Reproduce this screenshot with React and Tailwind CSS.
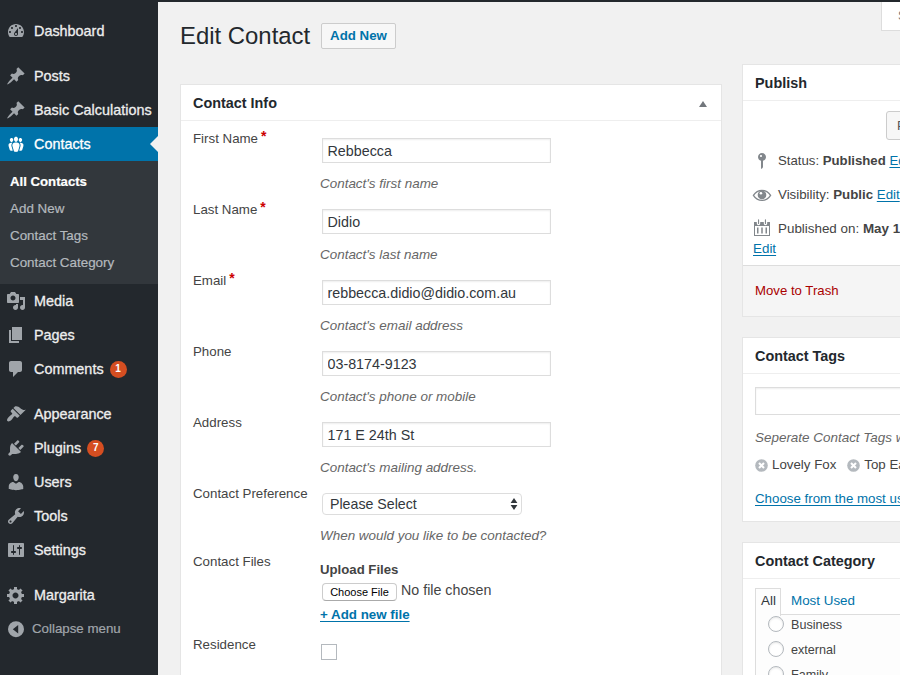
import React from "react";

const paths = {
  dashboard:
    "M3.76 16h12.48c1.1-1.37 1.76-3.11 1.76-5 0-4.42-3.58-8-8-8s-8 3.58-8 8c0 1.89.66 3.63 1.76 5zM10 4c.55 0 1 .45 1 1s-.45 1-1 1-1-.45-1-1 .45-1 1-1zM6 6c.55 0 1 .45 1 1s-.45 1-1 1-1-.45-1-1 .45-1 1-1zm8 0c.55 0 1 .45 1 1s-.45 1-1 1-1-.45-1-1 .45-1 1-1zm-5.37 5.55L12 7v6c0 1.1-.9 2-2 2s-2-.9-2-2c0-.57.24-1.08.63-1.45zM4 10c.55 0 1 .45 1 1s-.45 1-1 1-1-.45-1-1 .45-1 1-1zm12 0c.55 0 1 .45 1 1s-.45 1-1 1-1-.45-1-1 .45-1 1-1zm-5 3c0-.55-.45-1-1-1s-1 .45-1 1 .45 1 1 1 1-.45 1-1z",
  pushpin:
    "M10.44 3.02l1.82-1.82 6.36 6.35-1.83 1.82c-1.05-.68-2.48-.57-3.41.36l-.75.75c-.92.93-1.04 2.35-.35 3.41l-1.83 1.82-2.41-2.41-2.8 2.79c-.42.42-3.38 2.71-3.8 2.29s1.86-3.39 2.28-3.81l2.79-2.79L4.1 9.36l1.83-1.82c1.05.69 2.48.57 3.4-.36l.75-.75c.93-.92 1.05-2.35.36-3.41z",
  groups:
    "M8.03 4.46c-.29 1.28.55 3.46 1.97 3.46 1.41 0 2.25-2.18 1.96-3.46-.22-.98-1.08-1.63-1.96-1.63-.89 0-1.74.65-1.97 1.63zm-4.13.9c-.25 1.08.47 2.93 1.67 2.93s1.92-1.85 1.67-2.93c-.19-.83-.92-1.39-1.67-1.39s-1.48.56-1.67 1.39zm8.86 0c-.25 1.08.47 2.93 1.66 2.93 1.2 0 1.92-1.85 1.67-2.93-.19-.83-.92-1.39-1.67-1.39-.74 0-1.47.56-1.66 1.39zm-.59 11.43l1.25-4.3C14.2 10 12.71 8.47 10 8.47c-2.72 0-4.21 1.53-3.44 4.02l1.26 4.3C8.05 17.51 9 18 10 18c.98 0 1.94-.49 2.17-1.21zm-6.1-7.63c-.49.67-.96 1.83-.42 3.59l1.12 3.79c-.34.2-.77.31-1.2.31-.85 0-1.65-.41-1.85-1.03l-1.07-3.65c-.65-2.11.61-3.4 2.92-3.4.27 0 .54.02.79.06-.1.1-.2.22-.29.33zm8.35-.39c2.31 0 3.58 1.29 2.92 3.4l-1.07 3.65c-.2.62-1 1.03-1.85 1.03-.43 0-.86-.11-1.2-.31l1.11-3.77c.55-1.78.08-2.94-.42-3.61-.08-.11-.18-.23-.28-.33.25-.04.51-.06.79-.06z",
  media:
    "M13 11V4c0-.55-.45-1-1-1h-1.67L9 1H5L3.67 3H2c-.55 0-1 .45-1 1v7c0 .55.45 1 1 1h10c.55 0 1-.45 1-1zM7 4.5c1.38 0 2.5 1.12 2.5 2.5S8.38 9.5 7 9.5 4.5 8.38 4.5 7 5.62 4.5 7 4.5zM14 6h5v10.5c0 1.38-1.12 2.5-2.5 2.5S14 17.88 14 16.5s1.12-2.5 2.5-2.5c.17 0 .34.02.5.05V9h-3V6zm-4 8.05V13h2v3.5c0 1.38-1.12 2.5-2.5 2.5S7 17.88 7 16.5 8.12 14 9.5 14c.17 0 .34.02.5.05z",
  pages: "M6 15V2h10v13H6zm-1 1h8v2H3V5h2v11z",
  comments:
    "M5 2h9c1.1 0 2 .9 2 2v7c0 1.1-.9 2-2 2h-2l-5 5v-5H5c-1.1 0-2-.9-2-2V4c0-1.1.9-2 2-2z",
  appearance:
    "M14.48 11.06L7.41 3.99l1.5-1.5c.5-.56 2.3-.47 3.51.32 1.21.8 1.43 1.28 2.91 2.1 1.18.64 2.45 1.26 4.45.85zm-.71.71L6.7 4.7 4.93 6.47c-.39.39-.39 1.02 0 1.41l1.06 1.06c.39.39.39 1.03 0 1.42-.6.6-1.43 1.11-2.21 1.69-.35.26-.7.53-1.01.84C1.43 14.23.4 16.08 1.4 17.07c.99 1 2.84-.03 4.18-1.36.31-.31.58-.66.85-1.02.57-.78 1.08-1.61 1.69-2.21.39-.39 1.02-.39 1.41 0l1.06 1.06c.39.39 1.02.39 1.41 0z",
  plugins:
    "M13.11 4.36L9.87 7.6 8 5.73l3.24-3.24c.35-.34 1.05-.2 1.56.32.52.51.66 1.21.31 1.55zm-8 1.77l.91-1.12 9.01 9.01-1.19.84c-.71.71-2.63 1.16-3.82 1.16H6.14L4.9 17.26c-.59.59-1.54.59-2.12 0-.59-.58-.59-1.53 0-2.12l1.24-1.24v-3.88c0-1.13.4-3.19 1.09-3.89zm7.26 3.97l3.24-3.24c.34-.35 1.04-.21 1.55.31.52.51.66 1.21.31 1.55l-3.24 3.25z",
  users:
    "M10 9.25c-2.27 0-2.73-3.44-2.73-3.44C7 4.02 7.82 2 9.97 2c2.16 0 2.98 2.02 2.71 3.81 0 0-.41 3.44-2.68 3.44zm0 2.57L12.72 10c2.39 0 4.52 2.33 4.52 4.53v2.49s-3.65 1.13-7.24 1.13c-3.65 0-7.24-1.13-7.24-1.13v-2.49c0-2.25 1.94-4.48 4.47-4.48z",
  tools:
    "M16.68 9.77c-1.34 1.34-3.3 1.67-4.95.99l-5.41 6.52c-.99.99-2.59.99-3.58 0s-.99-2.59 0-3.57l6.52-5.42c-.68-1.65-.35-3.61.99-4.95 1.28-1.28 3.12-1.62 4.72-1.06l-2.89 2.89 2.82 2.82 2.86-2.87c.53 1.58.18 3.39-1.08 4.65zM3.81 16.21c.4.39 1.04.39 1.43 0 .4-.4.4-1.04 0-1.43-.39-.4-1.03-.4-1.43 0-.39.39-.39 1.03 0 1.43z",
  settings:
    "M18 16V4c0-.55-.45-1-1-1H3c-.55 0-1 .45-1 1v12c0 .55.45 1 1 1h14c.55 0 1-.45 1-1zM8 11h1c.55 0 1 .45 1 1s-.45 1-1 1H8v1.5c0 .28-.22.5-.5.5s-.5-.22-.5-.5V13H6c-.55 0-1-.45-1-1s.45-1 1-1h1V5.5c0-.28.22-.5.5-.5s.5.22.5.5V11zm5-2h-1c-.55 0-1-.45-1-1s.45-1 1-1h1V5.5c0-.28.22-.5.5-.5s.5.22.5.5V7h1c.55 0 1 .45 1 1s-.45 1-1 1h-1v5.5c0 .28-.22.5-.5.5s-.5-.22-.5-.5V9z",
  generic:
    "M18 12h-2.18c-.17.7-.44 1.35-.81 1.93l1.54 1.54-2.1 2.1-1.54-1.54c-.58.36-1.23.63-1.91.79V19H8v-2.18c-.68-.16-1.33-.43-1.91-.79l-1.54 1.54-2.12-2.12 1.54-1.54c-.36-.58-.63-1.23-.79-1.91H1V9.03h2.17c.16-.7.44-1.35.8-1.94L2.43 5.55l2.1-2.1 1.54 1.54c.58-.37 1.24-.64 1.93-.81V2h3v2.18c.68.16 1.33.43 1.91.79l1.54-1.54 2.12 2.12-1.54 1.54c.36.59.64 1.24.8 1.94H18V12zm-8.5 1.5c1.66 0 3-1.34 3-3s-1.34-3-3-3-3 1.34-3 3 1.34 3 3 3z",
  collapse:
    "M10 2.2a8 8 0 1 0 0 16 8 8 0 0 0 0-16zM12.2 6v8.4L6.8 10.2z",
  pin: "M14 6c0 1.86-1.28 3.41-3 3.86V16c0 1-2 2-2 2V9.86c-1.72-.45-3-2-3-3.86 0-2.21 1.79-4 4-4s4 1.79 4 4zM8 5c0 .55.45 1 1 1s1-.45 1-1-.45-1-1-1-1 .45-1 1z",
  calendar:
    "M2 4h2.8v1.6a1.7 1.7 0 0 0 3.4 0V4h3.6v1.6a1.7 1.7 0 0 0 3.4 0V4H18v14H2zM3 8v9h14V8zM5 9.500h1.500v6H5zm4.250 0h1.500v6h-1.500zm4.250 0H15v6h-1.500zM6 1.800a.55.55 0 0 1 1.100 0v3.600a.55.55 0 0 1-1.100 0zM12.900 1.800a.55.55 0 0 1 1.100 0v3.600a.55.55 0 0 1-1.100 0z",
};

function Icon({ name, className = "" }) {
  return (
    <svg viewBox="0 0 20 20" className={`size-5 shrink-0 ${className}`} fill="currentColor" fillRule="evenodd">
      <path d={paths[name]} />
    </svg>
  );
}

function EyeIcon() {
  return (
    <svg viewBox="0 0 20 20" className="-ml-px size-5 shrink-0">
      <path d="M1.4 10.4C3.6 7 6.6 5.4 10 5.4s6.4 1.6 8.6 5c-2.2 3.4-5.2 5-8.6 5s-6.4-1.6-8.6-5z" fill="none" stroke="#82878c" strokeWidth="1.3" />
      <circle cx="10" cy="9.900" r="4.300" fill="#82878c" />
      <circle cx="8.900" cy="8.300" r="1.300" fill="#fff" />
    </svg>
  );
}

function MenuItem({ icon, label, badge, active }) {
  return (
    <li className={`relative flex h-[34px] items-center pl-1.5 ${active ? "bg-[#0073aa] text-white" : "text-[#eee]"}`}>
      <Icon name={icon} className={active ? "text-white" : "text-[#a0a5aa]"} />
      <span className="ml-2 whitespace-nowrap text-[14.4px] leading-[18px] [-webkit-text-stroke:0.3px]">{label}</span>
      {badge && (
        <span className="ml-[6px] flex size-[17px] items-center justify-center rounded-full bg-[#d54e21] text-[10px] font-bold leading-none text-white">
          {badge}
        </span>
      )}
      {active && (
        <span className="absolute right-0 top-[9px] border-y-8 border-r-8 border-y-transparent border-r-[#f1f1f1]" />
      )}
    </li>
  );
}

function Sidebar() {
  return (
    <nav className="w-[158px] shrink-0 bg-[#23282d] pt-3">
      <ul>
        <MenuItem icon="dashboard" label="Dashboard" />
      </ul>
      <ul className="mt-[11px]">
        <MenuItem icon="pushpin" label="Posts" />
        <MenuItem icon="pushpin" label="Basic Calculations" />
        <MenuItem icon="groups" label="Contacts" active />
        <li className="bg-[#32373c] pb-2 pl-[10px] pt-[7px] text-[13.4px] leading-[27px] text-[#b4b9be] [-webkit-text-stroke:0.2px]">
          <ul>
            <li className="text-[13.2px] font-bold text-white">All Contacts</li>
            <li>Add New</li>
            <li>Contact Tags</li>
            <li>Contact Category</li>
          </ul>
        </li>
        <MenuItem icon="media" label="Media" />
        <MenuItem icon="pages" label="Pages" />
        <MenuItem icon="comments" label="Comments" badge="1" />
      </ul>
      <ul className="mt-[11px]">
        <MenuItem icon="appearance" label="Appearance" />
        <MenuItem icon="plugins" label="Plugins" badge="7" />
        <MenuItem icon="users" label="Users" />
        <MenuItem icon="tools" label="Tools" />
        <MenuItem icon="settings" label="Settings" />
      </ul>
      <ul className="mt-[11px]">
        <MenuItem icon="generic" label="Margarita" />
        <li className="flex h-[34px] items-center pl-1.5 text-[#a0a5aa]">
          <Icon name="collapse" />
          <span className="ml-1.5 text-[13.3px] leading-[18px] [-webkit-text-stroke:0.2px]">Collapse menu</span>
        </li>
      </ul>
    </nav>
  );
}

function Box({ title, toggle, className = "", children }) {
  return (
    <section className={`border border-[#e5e5e5] bg-white ${className}`}>
      <header className="flex h-9 items-center justify-between border-b border-[#eee] px-3">
        <h2 className="whitespace-nowrap text-[14.4px] font-bold leading-5 text-[#23282d]">{title}</h2>
        {toggle && (
          <svg viewBox="0 0 8 6" className="mr-[2px] mt-[3px] h-1.5 w-2 fill-[#72777c]">
            <path d="M4 0l4 6H0z" />
          </svg>
        )}
      </header>
      {children}
    </section>
  );
}

function Row({ label, required, className, children }) {
  return (
    <div className={`flex ${className}`}>
      <div className="w-[127px] shrink-0 whitespace-nowrap pt-[9px] text-[13.3px] leading-[18px]">
        {label}
        {required && <span className="relative -top-[2px] ml-[3px] text-[14px] font-bold leading-none text-[#c00]">*</span>}
      </div>
      <div>{children}</div>
    </div>
  );
}

function Description({ children }) {
  return <p className="whitespace-nowrap text-[13.45px] italic leading-[18px] text-[#666]">{children}</p>;
}

function TextField({ label, required, value, hint }) {
  return (
    <Row label={label} required={required} className="h-[71px]">
      <input
        defaultValue={value}
        className="ml-0.5 mt-[17px] block h-[25px] w-[229px] border border-[#ddd] bg-white px-[4.5px] text-[14.3px] text-[#32373c] shadow-[inset_0_1px_2px_rgba(0,0,0,0.07)]"
      />
      <div className="mt-3">
        <Description>{hint}</Description>
      </div>
    </Row>
  );
}

function ContactInfo() {
  return (
    <Box title="Contact Info" toggle className="mt-[35px] h-[640px] w-[542px]">
      <div className="pl-3">
        <TextField label="First Name" required value="Rebbecca" hint="Contact's first name" />
        <TextField label="Last Name" required value="Didio" hint="Contact's last name" />
        <TextField label="Email" required value="rebbecca.didio@didio.com.au" hint="Contact's email address" />
        <TextField label="Phone" value="03-8174-9123" hint="Contact's phone or mobile" />
        <TextField label="Address" value="171 E 24th St" hint="Contact's mailing address." />
        <Row label="Contact Preference" className="h-[68px]">
          <div className="ml-0.5 mt-[17px] flex h-[22px] w-[200px] items-center justify-between rounded-[4px] border border-[#ddd] pl-[7px] pr-[3px] text-[14.2px] leading-none text-[#32373c]">
            <span>Please Select</span>
            <svg viewBox="0 0 8 12" className="h-3 w-2 fill-[#32373c]">
              <path d="M4 0l3.400 5H.6zM4 12L.6 7h6.800z" />
            </svg>
          </div>
          <div className="mt-3">
            <Description>When would you like to be contacted?</Description>
          </div>
        </Row>
        <Row label="Contact Files" className="h-[83px]">
          <p className="mt-[17px] text-[13.2px] font-bold leading-[18px]">Upload Files</p>
          <div className="ml-0.5 mt-1 flex h-[19px]">
            <button className="h-[18px] w-[75px] rounded-[4px] border border-[#ccc] border-b-[#aaa] bg-white text-[11px] leading-none text-black">
              Choose File
            </button>
            <span className="-mt-px ml-1 text-[14.25px] leading-4">No file chosen</span>
          </div>
          <a className="mt-1 block w-fit text-[13.35px] font-bold leading-[18px] text-[#0073aa] underline underline-offset-2">
            + Add new file
          </a>
        </Row>
        <Row label="Residence" className="h-12">
          <span className="ml-px mt-[17px] block size-4 border border-[#b4b9be] bg-white" />
        </Row>
      </div>
    </Box>
  );
}

function Link({ children, className = "" }) {
  return <a className={`text-[#0073aa] underline underline-offset-2 ${className}`}>{children}</a>;
}

function PublishBox() {
  return (
    <Box title="Publish" className="h-[253px] w-[282px]">
      <div className="h-[164px] whitespace-nowrap pl-[10px] pt-[10px] text-[13.2px] leading-[18px]">
        <div className="ml-[133px] flex h-[29px] w-[130px] items-center rounded-[3px] border border-[#ccc] bg-[#f7f7f7] pl-[10px] text-[#555]">
          Preview Changes
        </div>
        <div className="mt-[11px] flex h-5 items-center text-[#82878c]">
          <Icon name="pin" className="-ml-px" />
          <p className="ml-[6px] text-[#444]">
            Status: <b>Published</b> <Link>Edit</Link>
          </p>
        </div>
        <div className="mt-[14px] flex h-5 items-center">
          <EyeIcon />
          <p className="ml-[6px] text-[13.3px] text-[#444]">
            Visibility: <b>Public</b> <Link>Edit</Link>
          </p>
        </div>
        <div className="mt-[14px] flex h-5 items-center text-[#82878c]">
          <Icon name="calendar" className="-ml-px -mt-[2px]" />
          <p className="ml-[6px] text-[13.4px] text-[#444]">
            Published on: <b>May 1</b>
          </p>
        </div>
        <Link className="mt-px block w-fit text-[13.4px]">Edit</Link>
      </div>
      <div className="h-[51px] border-t border-[#ddd] bg-[#f5f5f5] px-3 pt-4 text-[13.2px] leading-[18px] text-[#a00]">
        Move to Trash
      </div>
    </Box>
  );
}

function Tag({ children }) {
  return (
    <span className="flex items-center gap-1">
      <svg viewBox="0 0 13 13" className="size-[13px]">
        <circle cx="6.500" cy="6.500" r="6.300" fill="#b4b9be" />
        <path d="M4 4l5 5M9 4L4 9" stroke="#fff" strokeWidth="2.100" />
      </svg>
      {children}
    </span>
  );
}

function TagsBox() {
  return (
    <Box title="Contact Tags" className="mt-5 h-[185px] w-[282px]">
      <div className="whitespace-nowrap px-3 pt-[13px] text-[13.3px] leading-[18px]">
        <input className="block h-7 w-[200px] border border-[#ddd] bg-white shadow-[inset_0_1px_2px_rgba(0,0,0,0.07)]" />
        <div className="mt-[14px]">
          <Description>Seperate Contact Tags with commas</Description>
        </div>
        <div className="mt-[9px] flex gap-[11px]">
          <Tag>Lovely Fox</Tag>
          <Tag>Top Earner</Tag>
        </div>
        <Link className="mt-4 block">Choose from the most used tags</Link>
      </div>
    </Box>
  );
}

function Radio({ children }) {
  return (
    <label className="flex h-[25px] items-center gap-[7px]">
      <span className="-mt-px size-4 rounded-full border border-[#b4b9be] bg-white shadow-[inset_0_1px_2px_rgba(0,0,0,0.1)]" />
      {children}
    </label>
  );
}

function CategoryBox() {
  return (
    <Box title="Contact Category" className="mt-5 h-[240px] w-[282px]">
      <div className="px-3 pt-[9px] text-[13.4px] leading-[18px]">
        <div className="flex h-[27px]">
          <span className="relative z-10 -mb-px w-[26px] border border-b-0 border-[#ddd] bg-[#fdfdfd] pl-[5px] pt-[3px] text-[#32373c]">All</span>
          <span className="ml-[10px] pt-1 text-[#0073aa]">Most Used</span>
        </div>
        <div className="-mt-px h-[150px] w-[256px] border border-[#ddd] bg-[#fdfdfd] pl-3 pt-0 text-[12.6px]">
          <div className="-mt-[3px]">
            <Radio>Business</Radio>
            <Radio>external</Radio>
            <Radio>Family</Radio>
          </div>
        </div>
      </div>
    </Box>
  );
}

export default function App() {
  return (
    <div className="flex h-[675px] w-[900px] flex-col overflow-hidden bg-[#f1f1f1] font-['Liberation_Sans',Arial,sans-serif] text-[#444]">
      <div className="h-0.5 shrink-0 bg-[#23282d]" />
      <div className="flex min-h-0 flex-1">
        <Sidebar />
        <main className="ml-[22px] w-[542px] shrink-0 pt-[21px]">
          <div className="flex h-[26px] items-center">
            <h1 className="w-[131px] whitespace-nowrap text-[23.9px] leading-7 text-[#23282d]">Edit Contact</h1>
            <a className="ml-[10px] flex h-[26px] w-[75px] items-center justify-center rounded-[2px] border border-[#ccc] bg-[#f7f7f7] text-[13.3px] font-bold leading-none text-[#0073aa]">
              Add New
            </a>
          </div>
          <ContactInfo />
        </main>
        <aside className="ml-5 w-[282px] shrink-0">
          <div className="mb-[33px] ml-[139px] h-[29px] w-[120px] border border-t-0 border-[#ddd] bg-white pl-4 pt-[5px] text-[13px] leading-[18px] text-[#72777c]">
            Screen Options
          </div>
          <PublishBox />
          <TagsBox />
          <CategoryBox />
        </aside>
      </div>
    </div>
  );
}
